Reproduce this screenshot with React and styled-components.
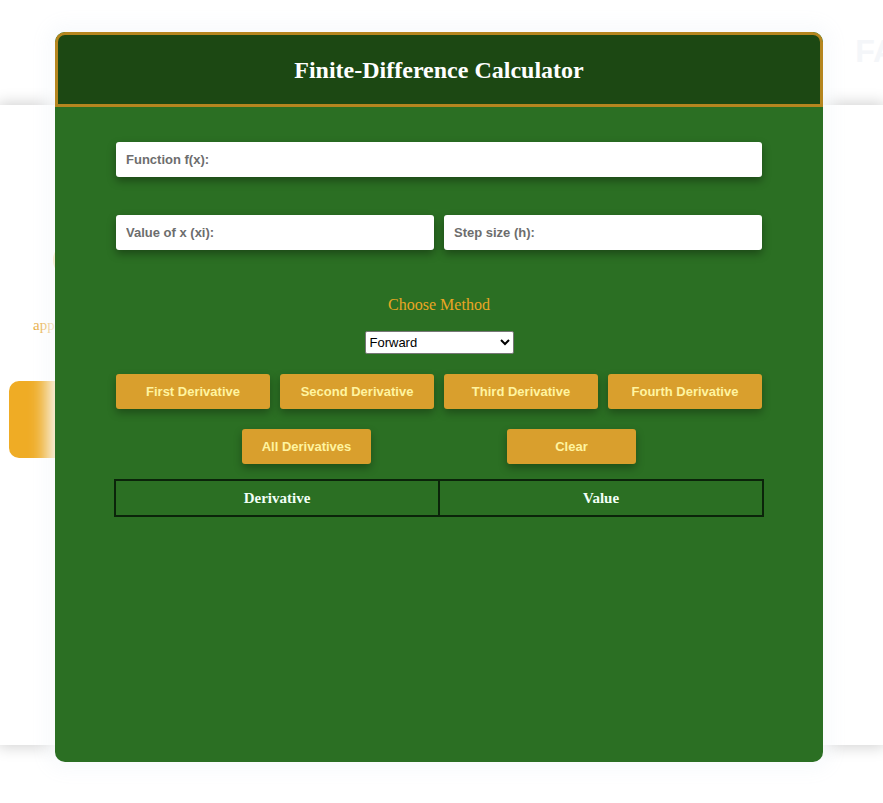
import React from 'react'
import styled, { createGlobalStyle } from 'styled-components'

const GlobalStyle = createGlobalStyle`
	html, body {
		margin: 0;
		padding: 0;
		background: #ffffff;
		font-family: "Liberation Serif", serif;
	}
`

const Page = styled.div`
	position: relative;
	width: 883px;
	height: 803px;
	overflow: hidden;
	background: #ffffff;
`

const TopBar = styled.header`
	height: 105px;
	display: flex;
	justify-content: flex-end;
	align-items: center;
	padding-top: 12px;
	box-sizing: border-box;
`

const NavText = styled.span`
	font-family: "Liberation Sans", sans-serif;
	font-weight: 700;
	font-size: 32px;
	color: #f4f6f9;
	margin-right: -38px;
	padding-bottom: 14px;
`

const Hero = styled.section`
	height: 640px;
	background: #ffffff;
	box-shadow: 0px 0px 14px 2px rgba(0,0,0,0.18);
	padding: 140px 0 0 9px;
	box-sizing: border-box;
	display: flex;
	flex-direction: column;
	align-items: flex-start;
`

const Dot = styled.div`
	width: 24px;
	height: 30px;
	border-radius: 50%;
	background: #efc25a;
	margin-left: 44px;
`

const HeroText = styled.p`
	margin: 42px 0 0 24px;
	color: #e7a93a;
	font-size: 15px;
`

const HeroButton = styled.div`
	margin-top: 47px;
	width: 120px;
	height: 77px;
	border-radius: 10px;
	background: #efac25;
`

const Modal = styled.div`
	position: absolute;
	left: 55px;
	top: 32px;
	width: 768px;
	height: 730px;
	display: flex;
	flex-direction: column;
	border-radius: 10px;
	background: #2b6f23;
	box-shadow: 0px 0px 18px 8px rgba(248,250,252,0.95);
	overflow: hidden;
`

const ModalHeader = styled.div`
	height: 75px;
	box-sizing: border-box;
	background: #1c4813;
	border: 3px solid #b5861f;
	border-radius: 10px 10px 0 0;
	display: flex;
	align-items: center;
	justify-content: center;
`

const Title = styled.h2`
	margin: 0;
	padding-top: 2px;
	color: #ffffff;
	font-family: "Liberation Serif", serif;
	font-weight: 700;
	font-size: 24px;
`

const ModalBody = styled.div`
	padding: 35px 61px 0;
	display: flex;
	flex-direction: column;
	align-items: center;
`

const Row = styled.div`
	width: 100%;
	display: flex;
	gap: ${(props) => props.gap || '10px'};
	justify-content: ${(props) => props.center ? 'center' : 'stretch'};
	margin-top: ${(props) => props.top || '0px'};
`

const Field = styled.input`
	flex: 1;
	min-width: 0;
	height: 35px;
	box-sizing: border-box;
	border: none;
	border-radius: 3px;
	padding: 0 10px;
	background: #ffffff;
	box-shadow: 0px 4px 8px rgba(0,0,0,0.35);
	font-family: "Liberation Sans", sans-serif;
	font-size: 13px;
	font-weight: 700;
	outline: none;
	&::placeholder {
		color: #6d6d6d;
	}
`

const MethodLabel = styled.div`
	margin-top: 46px;
	color: #eaa624;
	font-family: "Liberation Serif", serif;
	font-size: 16px;
`

const MethodSelect = styled.select`
	margin-top: 17px;
	width: 149px;
	height: 23px;
	font-family: "Liberation Sans", sans-serif;
	font-size: 13px;
	color: #000000;
	background: #ffffff;
	border: 1px solid #767676;
	border-radius: 2px;
`

const Button = styled.button`
	width: ${(props) => props.w || '154px'};
	height: 35px;
	border: none;
	border-radius: 3px;
	background: #d99f2d;
	color: #fff4a0;
	font-family: "Liberation Sans", sans-serif;
	font-weight: 700;
	font-size: 13px;
	box-shadow: 0px 4px 8px rgba(0,0,0,0.3);
	cursor: pointer;
	&:hover {
		background: #c98f20;
	}
`

const ResultTable = styled.table`
	margin-top: 15px;
	width: 650px;
	border-collapse: collapse;
`

const HeadCell = styled.th`
	width: 50%;
	height: 34px;
	padding: 0;
	border: 2px solid #0b240a;
	color: #f2fff8;
	font-family: "Liberation Serif", serif;
	font-size: 15px;
	font-weight: 700;
`

const methods = ['Forward', 'Backward', 'Central']
const derivatives = ['First Derivative', 'Second Derivative', 'Third Derivative', 'Fourth Derivative']

const App = () => {
	return (
		<Page>
			<GlobalStyle />
			<TopBar>
				<NavText>FAQ</NavText>
			</TopBar>
			<Hero>
				<Dot />
				<HeroText>approximate derivatives numerically</HeroText>
				<HeroButton />
			</Hero>
			<Modal>
				<ModalHeader>
					<Title>Finite-Difference Calculator</Title>
				</ModalHeader>
				<ModalBody>
					<Row>
						<Field placeholder="Function f(x):" />
					</Row>
					<Row top="38px">
						<Field placeholder="Value of x (xi):" />
						<Field placeholder="Step size (h):" />
					</Row>
					<MethodLabel>Choose Method</MethodLabel>
					<MethodSelect defaultValue="Forward">
						{methods.map((m) => <option key={m} value={m}>{m}</option>)}
					</MethodSelect>
					<Row top="20px">
						{derivatives.map((d) => <Button key={d}>{d}</Button>)}
					</Row>
					<Row center gap="136px" top="20px">
						<Button w="129px">All Derivatives</Button>
						<Button w="129px">Clear</Button>
					</Row>
					<ResultTable>
						<thead>
							<tr>
								<HeadCell>Derivative</HeadCell>
								<HeadCell>Value</HeadCell>
							</tr>
						</thead>
					</ResultTable>
				</ModalBody>
			</Modal>
		</Page>
	)
}

export default App
